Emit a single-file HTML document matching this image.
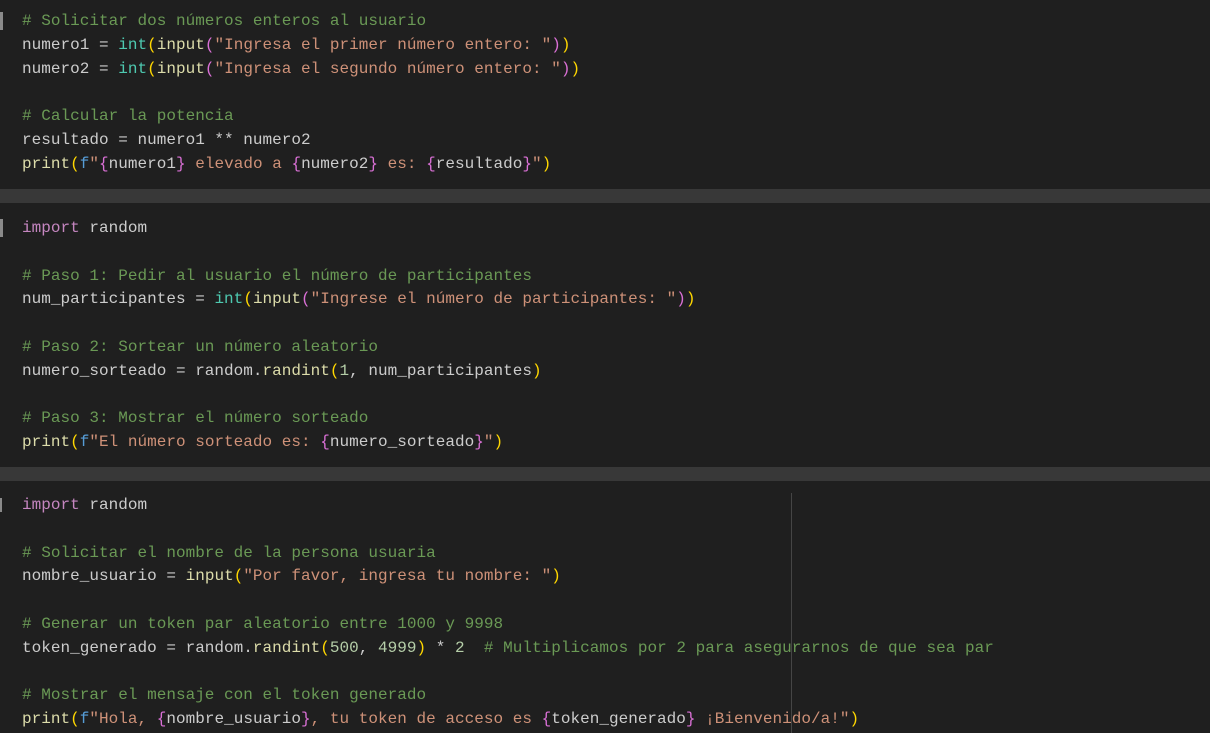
<!DOCTYPE html>
<html><head><meta charset="utf-8"><style>
body{margin:0;width:1210px;height:733px;background:#1f1f1f;overflow:hidden;position:relative;font-family:"Liberation Mono",monospace;font-size:16px;letter-spacing:0.02px;color:#cccccc}
.l{position:absolute;left:22px;height:24px;line-height:24px;white-space:pre}
.sep{position:absolute;left:0;width:1210px;background:#383838}
.c{color:#6a9955}.f{color:#dcdcaa}.t{color:#4ec9b0}.s{color:#ce9178}.y{color:#ffd700}.m{color:#da70d6}.k{color:#c586c0}.b{color:#569cd6}.n{color:#b5cea8}
.mk{position:absolute;left:0;width:3px;background:#8a8a8a}
</style></head><body>
<div class="sep" style="top:189px;height:14px"></div>
<div class="sep" style="top:467px;height:14px"></div>
<div class="mk" style="top:12px;height:18px"></div>
<div class="mk" style="top:219px;height:18px"></div>
<div class="mk" style="top:498px;height:14px;width:2px"></div>
<div style="position:absolute;left:791px;top:493px;width:1px;height:240px;background:#454545"></div>

<div class="l c" style="top:9px"># Solicitar dos números enteros al usuario</div>
<div class="l" style="top:33px">numero1 = <span class="t">int</span><span class="y">(</span><span class="f">input</span><span class="m">(</span><span class="s">"Ingresa el primer número entero: "</span><span class="m">)</span><span class="y">)</span></div>
<div class="l" style="top:57px">numero2 = <span class="t">int</span><span class="y">(</span><span class="f">input</span><span class="m">(</span><span class="s">"Ingresa el segundo número entero: "</span><span class="m">)</span><span class="y">)</span></div>
<div class="l c" style="top:104px"># Calcular la potencia</div>
<div class="l" style="top:128px">resultado = numero1 ** numero2</div>
<div class="l" style="top:152px"><span class="f">print</span><span class="y">(</span><span class="b">f</span><span class="s">"</span><span class="m">{</span>numero1<span class="m">}</span><span class="s"> elevado a </span><span class="m">{</span>numero2<span class="m">}</span><span class="s"> es: </span><span class="m">{</span>resultado<span class="m">}</span><span class="s">"</span><span class="y">)</span></div>

<div class="l" style="top:216px"><span class="k">import</span> random</div>
<div class="l c" style="top:264px"># Paso 1: Pedir al usuario el número de participantes</div>
<div class="l" style="top:287px">num_participantes = <span class="t">int</span><span class="y">(</span><span class="f">input</span><span class="m">(</span><span class="s">"Ingrese el número de participantes: "</span><span class="m">)</span><span class="y">)</span></div>
<div class="l c" style="top:335px"># Paso 2: Sortear un número aleatorio</div>
<div class="l" style="top:359px">numero_sorteado = random.<span class="f">randint</span><span class="y">(</span><span class="n">1</span>, num_participantes<span class="y">)</span></div>
<div class="l c" style="top:406px"># Paso 3: Mostrar el número sorteado</div>
<div class="l" style="top:430px"><span class="f">print</span><span class="y">(</span><span class="b">f</span><span class="s">"El número sorteado es: </span><span class="m">{</span>numero_sorteado<span class="m">}</span><span class="s">"</span><span class="y">)</span></div>

<div class="l" style="top:493px"><span class="k">import</span> random</div>
<div class="l c" style="top:541px"># Solicitar el nombre de la persona usuaria</div>
<div class="l" style="top:564px">nombre_usuario = <span class="f">input</span><span class="y">(</span><span class="s">"Por favor, ingresa tu nombre: "</span><span class="y">)</span></div>
<div class="l c" style="top:612px"># Generar un token par aleatorio entre 1000 y 9998</div>
<div class="l" style="top:636px">token_generado = random.<span class="f">randint</span><span class="y">(</span><span class="n">500</span>, <span class="n">4999</span><span class="y">)</span> * <span class="n">2</span>  <span class="c"># Multiplicamos por 2 para asegurarnos de que sea par</span></div>
<div class="l c" style="top:683px"># Mostrar el mensaje con el token generado</div>
<div class="l" style="top:707px"><span class="f">print</span><span class="y">(</span><span class="b">f</span><span class="s">"Hola, </span><span class="m">{</span>nombre_usuario<span class="m">}</span><span class="s">, tu token de acceso es </span><span class="m">{</span>token_generado<span class="m">}</span><span class="s"> ¡Bienvenido/a!"</span><span class="y">)</span></div>
</body></html>
